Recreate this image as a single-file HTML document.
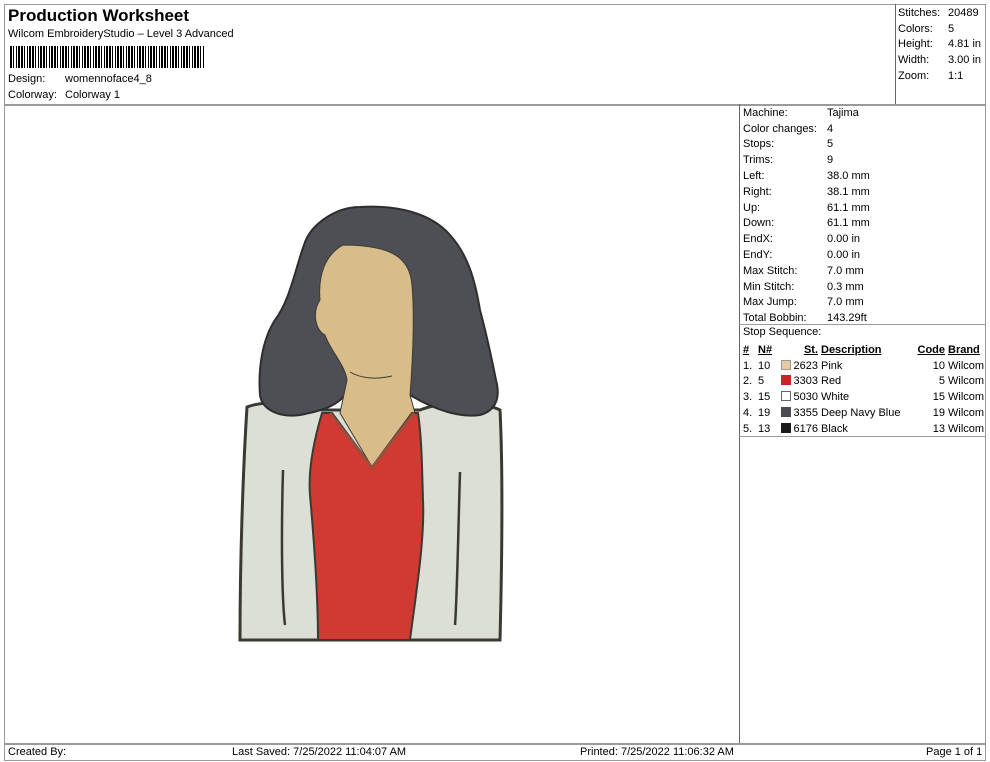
<!DOCTYPE html>
<html><head><meta charset="utf-8"><style>
*{margin:0;padding:0;box-sizing:border-box}
body{width:990px;height:762px;background:#fff;font-family:"Liberation Sans",Arial,sans-serif;font-size:11px;color:#000;position:relative;overflow:hidden}
.a{position:absolute;white-space:nowrap}
.l{position:absolute;background:#9a9a9a}
table{border-collapse:collapse;font-size:11px}
td{padding:0;height:15.8px;white-space:nowrap}
u{text-decoration:underline}
.sw{display:inline-block;width:10px;height:10px;vertical-align:-1px;margin-right:3px}
</style></head><body>
<div class="l" style="left:4px;top:4px;width:982px;height:1px"></div>
<div class="l" style="left:4px;top:4px;width:1px;height:757px"></div>
<div class="l" style="left:985px;top:4px;width:1px;height:757px"></div>
<div class="l" style="left:4px;top:104px;width:982px;height:2px"></div>
<div class="l" style="left:895px;top:4px;width:1px;height:100px;background:#666"></div>
<div class="l" style="left:739px;top:104px;width:1px;height:640px;background:#666"></div>
<div class="l" style="left:739px;top:324px;width:247px;height:1px"></div>
<div class="l" style="left:739px;top:436px;width:247px;height:1px"></div>
<div class="l" style="left:4px;top:743px;width:982px;height:2px"></div>
<div class="l" style="left:4px;top:760px;width:982px;height:1px"></div>

<div class="a" style="left:8px;top:6px;font-size:17px;font-weight:bold">Production Worksheet</div>
<div class="a" style="left:8px;top:28px">Wilcom EmbroideryStudio – Level 3 Advanced</div>
<div class="a" style="left:10px;top:46px;width:194px;height:22px;background:repeating-linear-gradient(90deg,#000 0 2px,#fff 2px 3px,#000 3px 4px,#fff 4px 6px,#000 6px 7px,#fff 7px 8px,#000 8px 10px,#fff 10px 11px)"></div>
<div class="a" style="left:8px;top:73px">Design:</div><div class="a" style="left:65px;top:73px">womennoface4_8</div>
<div class="a" style="left:8px;top:89px">Colorway:</div><div class="a" style="left:65px;top:89px">Colorway 1</div>

<table class="a" style="left:898px;top:5px"><tr><td style="width:50px">Stitches:</td><td>20489</td></tr><tr><td>Colors:</td><td>5</td></tr><tr><td>Height:</td><td>4.81 in</td></tr><tr><td>Width:</td><td>3.00 in</td></tr><tr><td>Zoom:</td><td>1:1</td></tr></table>

<table class="a" style="left:743px;top:105px">
<tr><td style="width:84px">Machine:</td><td>Tajima</td></tr>
<tr><td>Color changes:</td><td>4</td></tr><tr><td>Stops:</td><td>5</td></tr><tr><td>Trims:</td><td>9</td></tr>
<tr><td>Left:</td><td>38.0 mm</td></tr><tr><td>Right:</td><td>38.1 mm</td></tr><tr><td>Up:</td><td>61.1 mm</td></tr><tr><td>Down:</td><td>61.1 mm</td></tr>
<tr><td>EndX:</td><td>0.00 in</td></tr><tr><td>EndY:</td><td>0.00 in</td></tr><tr><td>Max Stitch:</td><td>7.0 mm</td></tr><tr><td>Min Stitch:</td><td>0.3 mm</td></tr><tr><td>Max Jump:</td><td>7.0 mm</td></tr><tr><td>Total Bobbin:</td><td>143.29ft</td></tr>
</table>
<div class="a" style="left:743px;top:326px">Stop Sequence:</div>
<table class="a" style="left:743px;top:342px">
<tr style="font-weight:bold"><td style="width:15px"><u>#</u></td><td style="width:20px"><u>N#</u></td><td style="width:43px;text-align:right;padding-right:3px"><u>St.</u></td><td style="width:90px"><u>Description</u></td><td style="width:37px;text-align:right;padding-right:3px"><u>Code</u></td><td><u>Brand</u></td></tr>
<tr><td>1.</td><td>10</td><td style="text-align:right;padding-right:3px"><span class="sw" style="background:#e8c9a0;border:1px solid #999"></span>2623</td><td>Pink</td><td style="text-align:right;padding-right:3px">10</td><td>Wilcom</td></tr>
<tr><td>2.</td><td>5</td><td style="text-align:right;padding-right:3px"><span class="sw" style="background:#d01f25"></span>3303</td><td>Red</td><td style="text-align:right;padding-right:3px">5</td><td>Wilcom</td></tr>
<tr><td>3.</td><td>15</td><td style="text-align:right;padding-right:3px"><span class="sw" style="background:#fff;border:1px solid #666"></span>5030</td><td>White</td><td style="text-align:right;padding-right:3px">15</td><td>Wilcom</td></tr>
<tr><td>4.</td><td>19</td><td style="text-align:right;padding-right:3px"><span class="sw" style="background:#4a4a55"></span>3355</td><td>Deep Navy Blue</td><td style="text-align:right;padding-right:3px">19</td><td>Wilcom</td></tr>
<tr><td>5.</td><td>13</td><td style="text-align:right;padding-right:3px"><span class="sw" style="background:#1a1a1a"></span>6176</td><td>Black</td><td style="text-align:right;padding-right:3px">13</td><td>Wilcom</td></tr>
</table>

<svg class="a" style="left:0;top:0" width="990" height="762">
<path d="M247,407 C243,470 240,560 240,640 L500,640 C502,560 503,470 500,410 C480,400 440,402 420,410 L322,410 C300,402 265,400 247,407 Z" fill="#dcdfd6" stroke="#3a3a33" stroke-width="3"/>
<path d="M283,470 C281,540 282,600 285,625" stroke="#3a3a33" stroke-width="2.5" fill="none"/>
<path d="M460,472 C458,540 457,600 455,625" stroke="#3a3a33" stroke-width="2.5" fill="none"/>
<path d="M360,207 C335,207 310,225 304,245 C295,270 290,300 275,320 C262,340 258,370 260,395 C262,410 280,418 300,415 C315,412 335,408 345,395 L410,395 C435,410 460,418 480,415 C498,410 500,395 496,380 C492,360 488,340 480,310 C475,280 468,255 450,235 C430,212 395,205 360,207 Z" fill="#4e4f55" stroke="#2e2e2e" stroke-width="2"/>
<path d="M343,245 C325,255 318,275 320,300 C312,312 315,330 325,335 C330,350 345,365 347,380 L340,413 L372,467 L415,413 L410,395 C412,370 415,320 412,285 C410,260 395,245 343,245 Z" fill="#d8bd8a" stroke="#3a3a33" stroke-width="1"/>
<path d="M322,413 C314,440 308,470 310,495 C314,540 318,600 318,640 L410,640 C415,600 425,540 423,500 C422,470 422,440 418,413 L412,413 L372,467 L332,413 Z" fill="#d13a32" stroke="#3a3a33" stroke-width="2"/>
<path d="M330,413 L372,468 L414,413" fill="none" stroke="#a04c3c" stroke-width="3"/>
<path d="M350,372 C360,378 375,380 392,376" fill="none" stroke="#3a3a33" stroke-width="1"/>
</svg>

<div class="a" style="left:8px;top:746px;font-size:11px">Created By:</div>
<div class="a" style="left:232px;top:746px">Last Saved: 7/25/2022 11:04:07 AM</div>
<div class="a" style="left:580px;top:746px">Printed: 7/25/2022 11:06:32 AM</div>
<div class="a" style="left:926px;top:746px">Page 1 of 1</div>
</body></html>
